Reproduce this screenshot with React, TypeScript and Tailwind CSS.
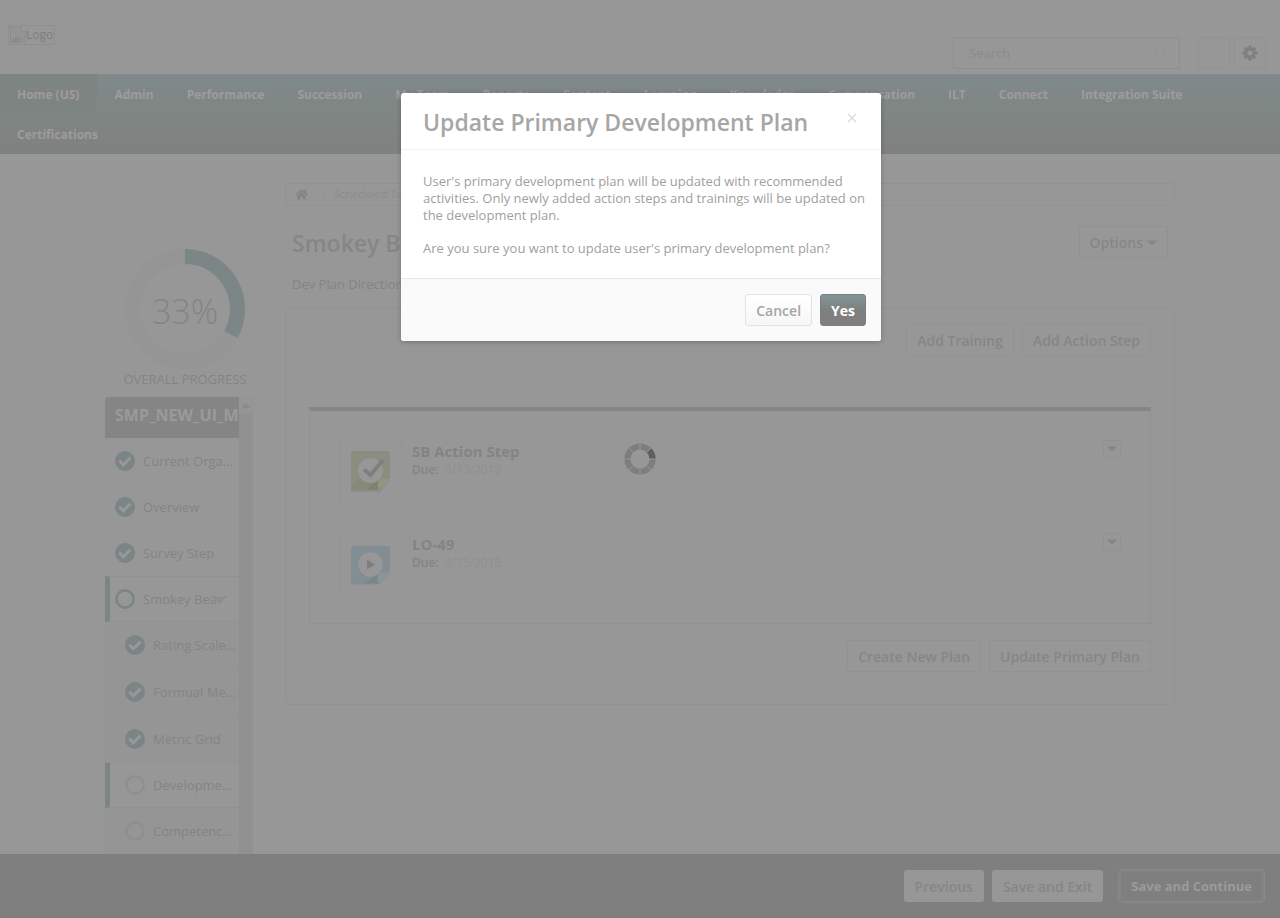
import type { ReactNode } from "react";
import { FaHome } from "react-icons/fa";

const NAV = [
  "Home (US)",
  "Admin",
  "Performance",
  "Succession",
  "My Team",
  "Reports",
  "Content",
  "Learning",
  "Knowledge",
  "Compensation",
  "ILT",
  "Connect",
  "Integration Suite",
  "Certifications",
];

type Step = { label: string; done: boolean; selected?: boolean; sub?: boolean; expandable?: boolean };

const STEPS: Step[] = [
  { label: "Current Orga...", done: true },
  { label: "Overview", done: true },
  { label: "Survey Step", done: true },
  { label: "Smokey Bear", done: false, selected: true, expandable: true },
  { label: "Rating Scale...", done: true, sub: true },
  { label: "Formual Me...", done: true, sub: true },
  { label: "Metric Grid", done: true, sub: true },
  { label: "Developme...", done: false, sub: true, selected: true },
  { label: "Competenc...", done: false, sub: true },
];

function rowClass(step: Step) {
  if (step.sub && step.selected) {
    return "h-[45px] border-b border-l-5 border-b-[#929292] border-l-[#7c8585] pl-[15px]";
  }
  if (step.sub) {
    return "h-[47px] border-b border-l-5 border-b-[#939393] border-l-transparent bg-[#959595] pl-[15px]";
  }
  if (step.selected) {
    return "h-[46px] border-y border-l-5 border-y-[#929292] border-l-[#7c8585] pl-[5px]";
  }
  return "h-[46px] border-l-5 border-l-transparent pl-[5px]";
}

function Caret() {
  return (
    <svg width="10" height="6" viewBox="0 0 10 6" aria-hidden="true">
      <path d="M0 0.5h10L5 5.5z" fill="currentColor" />
    </svg>
  );
}

function StepIcon({ step }: { step: Step }) {
  if (step.done) {
    return (
      <svg className="shrink-0" width="20" height="20" viewBox="0 0 20 20" aria-hidden="true">
        <circle cx="10" cy="10" r="10" fill="#7c8585" />
        <path d="M4.3 9.8l4 4 7.2-7.2" fill="none" stroke="#989898" strokeWidth="3" />
      </svg>
    );
  }
  return (
    <svg className="shrink-0" width="20" height="20" viewBox="0 0 20 20" aria-hidden="true">
      <circle cx="10" cy="10" r="8.6" fill="none" stroke={step.sub ? "#8f8f8f" : "#7c8585"} strokeWidth="2.6" />
    </svg>
  );
}

function Button({ children }: { children: ReactNode }) {
  return (
    <button className="flex h-8 items-center gap-1 rounded-[3px] border border-[#919191] px-2.5 pt-px text-[14px] font-semibold text-[#868686]">
      {children}
    </button>
  );
}

function ActionIcon() {
  return (
    <svg width="40" height="42" viewBox="0 0 40 42" aria-hidden="true">
      <path d="M1.5 41a1.5 1.5 0 0 1-1.5-1.5V38h30l9-8-9 10q-1 1-2 1z" fill="#8d8d8d" />
      <path d="M2 0h35a2 2 0 0 1 2 2v27L28 39H2a2 2 0 0 1-2-2V2a2 2 0 0 1 2-2z" fill="#8b8d7e" />
      <path d="M0 36L27 12v27H2a2 2 0 0 1-2-2z" fill="#868977" />
      <path d="M16 39L27 28v11z" fill="#7f8273" />
      <path d="M27 39V31q0-3 4-3l8-1v2z" fill="#929582" />
      <circle cx="19.5" cy="19.5" r="12.5" fill="#979797" />
      <path d="M13 18.5l6.5 5.5L32 9" fill="none" stroke="#7e7e7e" strokeWidth="4" />
    </svg>
  );
}

function PlayIcon() {
  return (
    <svg width="40" height="42" viewBox="0 0 40 42" aria-hidden="true">
      <path d="M1.5 40.5a1.5 1.5 0 0 1-1.5-1.5v-1.5h28l11-9-10 11q-1 1-2 1z" fill="#8d8d8d" />
      <path d="M2 2h35a2 2 0 0 1 2 2v25L28 39.5H2a2 2 0 0 1-2-2V4a2 2 0 0 1 2-2z" fill="#828e93" />
      <path d="M14 39.5L27 29v10.5z" fill="#7a868b" />
      <path d="M27 39.5V32q0-3 4-3l8-1v1z" fill="#8b969a" />
      <circle cx="19.5" cy="20.5" r="12.2" fill="#979797" />
      <path d="M16 15.5v10l8-5z" fill="#7e7e7e" />
    </svg>
  );
}

function PlanItem({ title, icon }: { title: string; icon: ReactNode }) {
  return (
    <li className="flex h-[83px] items-start gap-[10px] border border-[#959595] p-[10px]">
      <div className="flex size-[63px] items-center justify-center border border-[#949494]">{icon}</div>
      <div className="flex-1 pt-0.5 text-[#848484]">
        <h3 className="text-[15px] leading-[18px] font-bold">{title}</h3>
        <p className="text-[12px] leading-5">
          <span className="font-semibold">Due:</span>
          <span className="ml-1.5 text-[#8f8f8f]">3/13/2018</span>
        </p>
      </div>
      <button
        aria-label={`${title} options`}
        className="flex size-[18px] items-center justify-center rounded-[3px] border border-[#919191] text-[#848484]"
      >
        <Caret />
      </button>
    </li>
  );
}

function Spinner() {
  return (
    <svg width="32" height="32" viewBox="-16 -16 32 32" role="img" aria-label="Loading">
      <circle r="12.6" fill="none" stroke="#7d7d7d" strokeWidth="6" />
      <path d="M12.6 0A12.6 12.6 0 0 0 8.91 -8.91" fill="none" stroke="#5f5f5f" strokeWidth="6" />
      <path
        d="M-16 0H-9M9 0H16M0-16V-9M0 9V16M-11.5-11.5L-6.5-6.5M6.5 6.5L11.5 11.5M-11.5 11.5L-6.5 6.5M6.5-6.5L11.5-11.5"
        stroke="#989898"
        strokeWidth="1"
      />
    </svg>
  );
}

function Dialog() {
  return (
    <section
      role="dialog"
      aria-labelledby="dialog-title"
      className="w-[480px] overflow-hidden rounded-[3px] bg-white text-[#a6a6a6] shadow-[0_1px_5px_rgba(0,0,0,0.25)]"
    >
      <header className="flex h-[57px] items-center justify-between border-b border-[#f2f2f2] pr-6 pl-[22px]">
        <h2 id="dialog-title" className="pt-0.5 text-[23px] leading-8 font-semibold">
          Update Primary Development Plan
        </h2>
        <button aria-label="Close" className="mb-1.5 text-[#dcdcdc]">
          <svg width="10" height="10" viewBox="0 0 10 10" aria-hidden="true">
            <path d="M1 1l8 8M9 1l-8 8" stroke="currentColor" strokeWidth="1.5" />
          </svg>
        </button>
      </header>
      <div className="flex flex-col gap-4 pt-[23px] pr-2 pb-[21px] pl-[22px] text-[13px] leading-[17px] text-[#a0a0a0]">
        <p>
          User's primary development plan will be updated with recommended activities. Only newly added action steps
          and trainings will be updated on the development plan.
        </p>
        <p>Are you sure you want to update user's primary development plan?</p>
      </div>
      <footer className="flex justify-end gap-2 border-t border-[#e9e9e9] bg-[#fafafa] p-[15px]">
        <button className="h-8 rounded-[3px] border border-[#e2e2e2] bg-linear-to-b from-white to-[#f6f6f6] px-2.5 pt-px text-[14px] font-semibold">
          Cancel
        </button>
        <button className="h-8 rounded-[3px] border border-[#7c7f7f] bg-linear-to-b from-[#7f9797] to-[#7f7f7f] to-50% px-2.5 pt-px text-[14px] font-bold text-white">
          Yes
        </button>
      </footer>
    </section>
  );
}

export default function App() {
  return (
    <div className="relative flex h-screen flex-col overflow-hidden bg-[#979797] font-['Open_Sans','Noto_Sans',sans-serif] text-[13px] text-[#848484]">
      <header className="flex h-[74px] shrink-0 items-start justify-between pr-[14px] pl-2">
        <a
          href="#home"
          className="mt-[25px] flex h-5 items-center border border-[#8f8f8f] px-px text-[12px] text-[#7f7f7f]"
        >
          <svg width="16" height="16" viewBox="0 0 16 16" aria-hidden="true">
            <path d="M0.5 0.5h11l4 4v4L8 15.5H0.5z" fill="#919599" stroke="#8b8b8b" />
            <path d="M11.5 0.5v4h4" fill="#9c9c9c" stroke="#8b8b8b" />
            <path d="M1 15q3-6 7-5l3 2-3 3z" fill="#84917f" />
            <path d="M16 8v8H9z" fill="#919191" />
          </svg>
          Logo
        </a>
        <div className="mt-[37px] flex">
          <label className="mr-[18px] flex h-8 w-[227px] items-center border border-[#8f8f8f] pr-3 pl-[15px]">
            <input
              type="search"
              aria-label="Search"
              placeholder="Search"
              className="min-w-0 flex-1 bg-transparent pt-0.5 text-[13px] outline-none placeholder:text-[#8b8b8b]"
            />
            <svg width="12" height="12" viewBox="0 0 12 12" aria-hidden="true">
              <circle cx="5" cy="5" r="4.5" fill="none" stroke="#929292" />
              <path d="M8.5 8.5L11.5 11.5" stroke="#929292" />
            </svg>
          </label>
          <button aria-label="Notifications" className="mr-1 h-8 w-8 rounded-[4px] border border-[#919191]" />
          <button
            aria-label="Settings"
            className="flex h-8 w-8 items-center justify-center rounded-[4px] border border-[#919191] text-[#808080]"
          >
            <svg width="16" height="16" viewBox="-8 -8 16 16" aria-hidden="true">
              <circle r="4.2" fill="none" stroke="currentColor" strokeWidth="3.4" />
              <path
                d="M0-7.7V-5M0 5V7.7M-7.7 0H-5M5 0H7.7M-5.2-5.2L-3.8-3.8M3.8 3.8L5.2 5.2M-5.2 5.2L-3.8 3.8M3.8-3.8L5.2-5.2"
                stroke="currentColor"
                strokeWidth="3.2"
              />
            </svg>
          </button>
        </div>
      </header>

      <nav className="shrink-0 bg-linear-to-b from-[#7f8a8a] via-[#7f8684] to-[#7f8181]">
        <ul className="flex flex-wrap">
          {NAV.map((item, i) => (
            <li key={item}>
              <a
                href="#nav"
                className={`flex h-10 items-center pt-px pl-[17px] text-[12px] font-bold text-[#a09b9b] ${
                  i === 0 ? "bg-[#7d8482] pr-[18px]" : "pr-4"
                }`}
              >
                {item}
              </a>
            </li>
          ))}
        </ul>
      </nav>

      <div className="mx-auto flex min-h-0 w-full max-w-[1070px] flex-1 gap-5">
        <aside className="flex w-40 shrink-0 flex-col">
          <div className="flex flex-col items-center pt-[95px]">
            <svg width="120" height="120" viewBox="-60 -60 120 120" role="img" aria-label="33%">
              <circle r="52.5" fill="none" stroke="#959595" strokeWidth="15" />
              <path d="M0-52.5A52.5 52.5 0 0 1 46 25.3" fill="none" stroke="#7c8686" strokeWidth="15" />
              <text y="15" textAnchor="middle" fontSize="34" fontWeight="300" fill="#848484">
                33%
              </text>
            </svg>
            <p className="text-[13px] leading-5 whitespace-nowrap">OVERALL PROGRESS</p>
          </div>
          <div className="mt-2 flex min-h-0 w-[148px] flex-1 justify-between overflow-hidden rounded-t-[3px] border-r border-[#939393]">
            <div className="w-[134px] shrink-0 overflow-hidden">
              <h2 className="h-[41px] overflow-hidden bg-[#858585] pt-1.5 pl-[10px] text-[16px] leading-6 font-bold whitespace-nowrap text-[#9a9a9a]">
                SMP_NEW_UI_M
              </h2>
              <ul>
                {STEPS.map((step) => (
                  <li key={step.label}>
                    <a
                      href="#step"
                      className={`relative flex items-center gap-2 text-[13px] whitespace-nowrap ${rowClass(step)}`}
                    >
                      <StepIcon step={step} />
                      <span className="pt-0.5">{step.label}</span>
                      {step.expandable && (
                        <svg
                          className="absolute top-[18px] right-3"
                          width="14"
                          height="8"
                          viewBox="0 0 14 8"
                          aria-hidden="true"
                        >
                          <path d="M1 1l6 6 6-6" fill="none" stroke="#8d8d8d" strokeWidth="2" />
                        </svg>
                      )}
                    </a>
                  </li>
                ))}
              </ul>
            </div>
            <div className="flex w-[13px] flex-col items-center bg-[#959595] text-[#8a8a8a]">
              <div className="flex h-[17px] items-center">
                <svg width="8" height="5" viewBox="0 0 8 5" aria-hidden="true">
                  <path d="M0 5L4 0l4 5z" fill="currentColor" />
                </svg>
              </div>
              <div className="w-full flex-1 bg-[#909090]" />
            </div>
          </div>
        </aside>

        <main className="min-w-0 flex-1 pt-[29px]">
          <div className="flex h-[23px] items-center rounded-[3px] border border-[#929292] pl-[9px] text-[11px] text-[#8c8c8c]">
            <FaHome className="text-[13px] text-[#848484]" />
            <svg className="mr-2 ml-3" width="6" height="16" viewBox="0 0 6 16" aria-hidden="true">
              <path d="M1 0l4 8-4 8" fill="none" stroke="#929292" />
            </svg>
            Scheduled Tasks
          </div>
          <div className="mt-5 flex items-start justify-between px-[7px]">
            <h1 className="text-[23px] leading-[34px] font-semibold text-[#868686]">Smokey Bear</h1>
            <Button>
              Options
              <Caret />
            </Button>
          </div>
          <p className="mt-3.5 pl-[7px] text-[13px] leading-5">Dev Plan Directions</p>
          <section className="mt-[13px] rounded-[5px] border border-[#929292] px-[23px] pt-4 pb-8">
            <div className="flex justify-end gap-2">
              <Button>Add Training</Button>
              <Button>Add Action Step</Button>
            </div>
            <ul className="mt-[51px] flex flex-col gap-[10px] border border-t-4 border-[#919191] border-t-[#858585] px-[18px] py-[18px]">
              <PlanItem title="SB Action Step" icon={<ActionIcon />} />
              <PlanItem title="LO-49" icon={<PlayIcon />} />
            </ul>
            <div className="mt-4 flex justify-end gap-2">
              <Button>Create New Plan</Button>
              <Button>Update Primary Plan</Button>
            </div>
          </section>
        </main>
      </div>

      <footer className="flex h-16 shrink-0 items-center justify-end gap-2 bg-[#7f7f7f] pr-4">
        <button className="h-8 rounded-[3px] bg-[#979797] px-[11px] pt-px text-[14px] font-semibold text-[#868686]">
          Previous
        </button>
        <button className="h-8 rounded-[3px] bg-[#979797] px-[11px] pt-px text-[14px] font-semibold text-[#868686]">
          Save and Exit
        </button>
        <button className="ml-2 h-8 rounded-[3px] border-2 border-[#848484] px-2.5 pt-0.5 text-[13px] font-bold text-[#9b9b9b] outline-1 outline-[#929292] outline-dotted">
          Save and Continue
        </button>
      </footer>

      <div className="pointer-events-none absolute inset-0 flex items-center justify-center">
        <Spinner />
      </div>
      <div className="absolute inset-x-0 top-[93px] flex justify-center pl-0.5">
        <Dialog />
      </div>
    </div>
  );
}
